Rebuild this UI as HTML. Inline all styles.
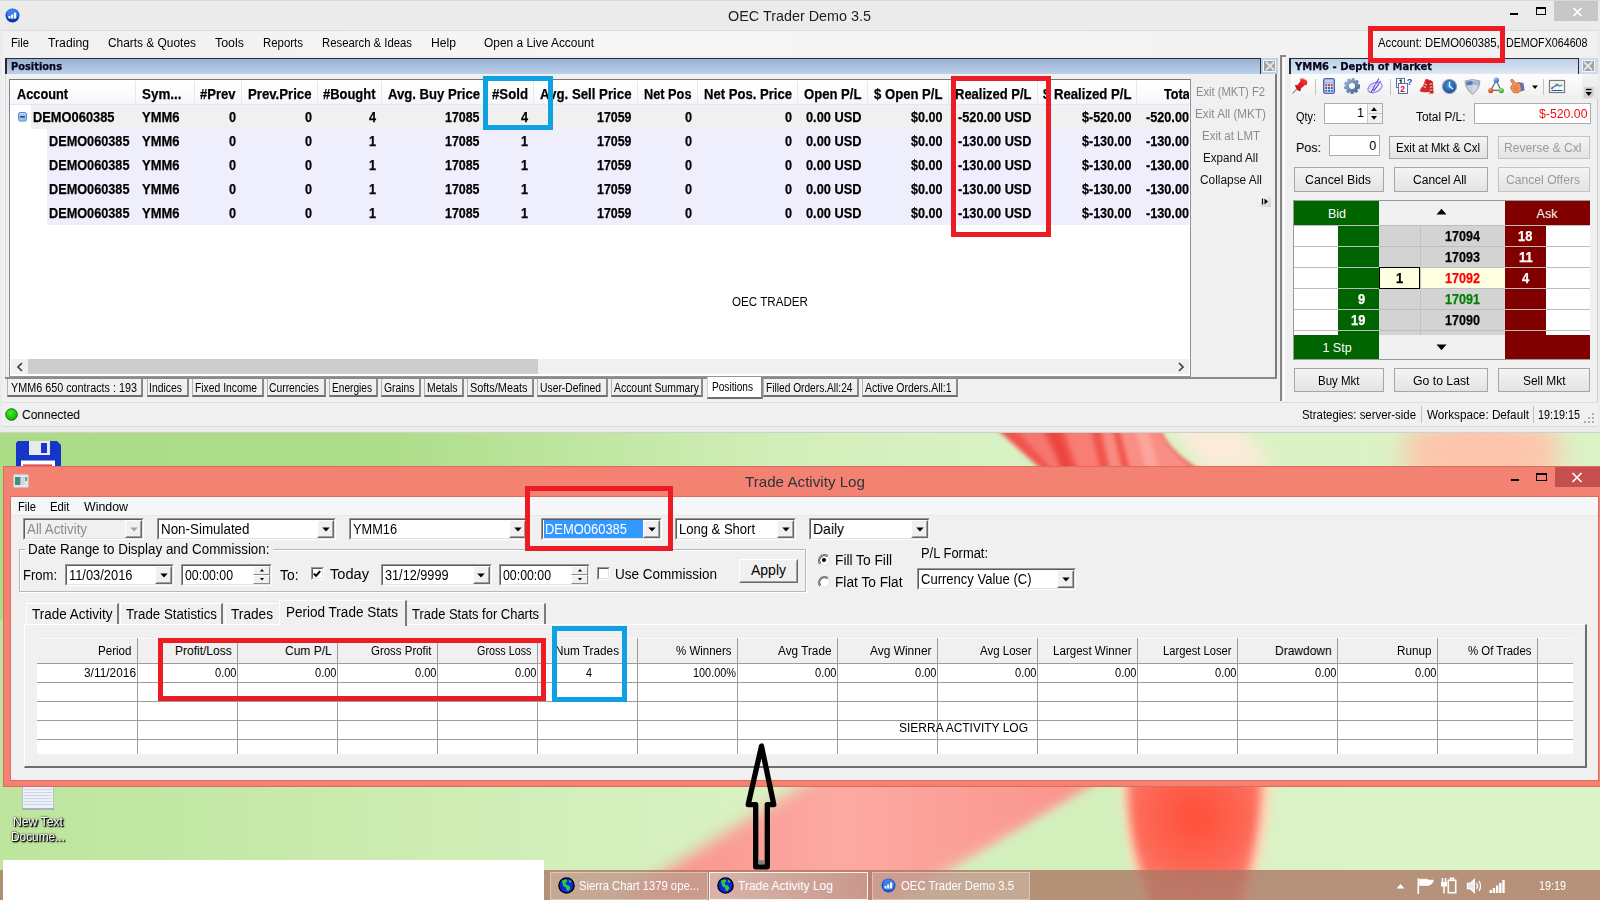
<!DOCTYPE html>
<html lang="en"><head><meta charset="utf-8"><title>OEC Trader Demo 3.5</title>
<style>
html,body{margin:0;padding:0;}
body{width:1600px;height:911px;overflow:hidden;position:relative;background:#fff;font-family:"Liberation Sans",sans-serif;}
div,span,svg{position:absolute;box-sizing:border-box;}
.t{white-space:nowrap;transform-origin:0 50%;display:block;font-family:"Liberation Sans",sans-serif;}
.dv{font-family:"DejaVu Sans",sans-serif;}
.win{overflow:hidden;}
</style></head>
<body>
<div style="left:0;top:0;width:1600px;height:620px;background:linear-gradient(90deg,#abdc86 0px,#addd89 380px,#bfe6a0 580px,#d2eeb9 780px,#d9f2c4 1000px,#dbf3c6 1600px);"></div>
<div style="left:0;top:620px;width:1600px;height:291px;background:linear-gradient(90deg,#bde59d 0px,#c4e8a6 200px,#d0edb6 480px,#d9f2c3 760px,#dcf3c7 1600px);"></div>
<svg style="left:0;top:0" width="1600" height="911" viewBox="0 0 1600 911">
<defs>
<filter id="b2" x="-20%" y="-20%" width="140%" height="140%"><feGaussianBlur stdDeviation="2"/></filter>
<filter id="b5" x="-20%" y="-20%" width="140%" height="140%"><feGaussianBlur stdDeviation="5"/></filter>
<filter id="b8" x="-20%" y="-20%" width="140%" height="140%"><feGaussianBlur stdDeviation="8"/></filter>
<filter id="b12" x="-30%" y="-30%" width="160%" height="160%"><feGaussianBlur stdDeviation="12"/></filter>
<linearGradient id="pk" x1="0" y1="0" x2="1" y2="0"><stop offset="0" stop-color="#f98e86"/><stop offset="0.45" stop-color="#fcaaa2"/><stop offset="1" stop-color="#fa9088"/></linearGradient>
<radialGradient id="rd" cx="0.5" cy="0.35" r="0.6"><stop offset="0" stop-color="#ff4e38"/><stop offset="0.7" stop-color="#fd6a58"/><stop offset="1" stop-color="#fc8272"/></radialGradient>
</defs>
<!-- upper strip -->
<g>
<polygon points="1170,425 1240,425 1275,470 1205,470" fill="#fcebd9" filter="url(#b8)"/>
<ellipse cx="1482" cy="452" rx="80" ry="40" fill="#fdc6ac" filter="url(#b12)"/>
<path d="M992,425 L1158,425 Q1166,450 1200,470 L1042,470 Z" fill="#f1554e" filter="url(#b2)"/>
<polygon points="1012,425 1040,425 1062,470 1052,470" fill="#f6766f" filter="url(#b2)"/>
<polygon points="1046,425 1056,425 1072,470 1064,470" fill="#ec4440" filter="url(#b2)"/>
<polygon points="1062,425 1090,425 1100,470 1078,470" fill="#f87d75" filter="url(#b2)"/>
<polygon points="1100,425 1112,425 1122,470 1110,470" fill="#f98b82" filter="url(#b2)"/>
<path d="M1118,425 L1158,425 Q1166,450 1196,470 L1130,470 Z" fill="#f98e85" filter="url(#b2)"/>
<polygon points="1134,425 1146,425 1160,470 1146,470" fill="#fba59b" filter="url(#b2)"/>
</g>
<!-- lower strip -->
<g>
<polygon points="827,770 1127,770 890,905 610,905" fill="url(#pk)" filter="url(#b8)"/>
<polygon points="1112,776 1138,905 900,905" fill="#d3efbb" filter="url(#b5)"/>
<path d="M1124,770 L1272,770 C1272,800 1266,860 1246,905 L1146,905 C1128,860 1122,810 1124,770 Z" fill="#fbd9b8" filter="url(#b5)"/>
<path d="M1128,770 L1262,770 C1262,800 1256,860 1238,905 L1152,905 C1134,860 1126,810 1128,770 Z" fill="url(#rd)" filter="url(#b5)"/>
</g>
</svg>
<svg style="left:16px;top:441px" width="46" height="30" viewBox="0 0 46 30">
<path d="M2,0 H41 L45,4 V30 H0 V2 Z" fill="#1536c8"/>
<rect x="13" y="0" width="21" height="14" fill="#e8e8ee"/>
<rect x="25" y="2" width="6" height="10" fill="#1536c8"/>
<rect x="5" y="19.500" width="34" height="11" fill="#ffffff"/>
<rect x="7" y="23.500" width="29" height="1.300" fill="#e02030"/>
</svg>
<div style="left:0px;top:0px;width:1600px;height:433px;background:#ebebeb;"></div>
<div style="left:0px;top:0px;width:1600px;height:1px;background:#dadada;"></div>
<div style="left:2px;top:31px;width:1596px;height:396px;background:#f0f0f0;"></div>
<div style="left:2px;top:30px;width:1596px;height:1px;background:#dcdcdc;"></div>
<div style="left:2px;top:31px;width:1596px;height:25px;background:linear-gradient(90deg,#f1f1f1,#f6f6f6 40%,#f1f1f1);"></div>
<div style="left:0px;top:432px;width:1600px;height:1px;background:#d0d0d0;"></div>
<svg style="left:5px;top:8px" width="15" height="15" viewBox="0 0 15 15">
<circle cx="7.5" cy="7.5" r="7" fill="#1a4fc4"/><circle cx="7.5" cy="6.3" r="5.6" fill="#3d7fe8"/><path d="M1.5,9 Q7.5,14 13.5,9 Q12,14 7.5,14.3 Q3,14 1.5,9Z" fill="#12349a"/>
<rect x="3.4" y="8" width="2" height="2.4" fill="#fff"/><rect x="6.1" y="6.6" width="2" height="3.8" fill="#fff"/><rect x="8.9" y="4.6" width="2.2" height="5.8" fill="#fff"/>
</svg>
<span class="t" style="left:728.00px;top:5.70px;font-size:15px;line-height:20px;color:#1e1e1e;transform:scaleX(0.9583);">OEC Trader Demo 3.5</span>
<div style="left:1510px;top:12.5px;width:8px;height:2px;background:#000;"></div>
<div style="left:1536px;top:7.2px;width:10px;height:8.3px;border:1px solid #000;border-top-width:2.5px;"></div>
<div style="left:1554px;top:1px;width:44px;height:20px;background:#c7c7c7;"></div>
<svg style="left:1571.5px;top:6.5px" width="11" height="10" viewBox="0 0 12 11"><path d="M1.5,1 L10.5,10 M10.5,1 L1.5,10" stroke="#fff" stroke-width="1.7" fill="none"/></svg>
<span class="t" style="left:11.00px;top:34.60px;font-size:12px;line-height:16px;color:#000;transform:scaleX(0.9309);">File</span>
<span class="t" style="left:48.00px;top:34.60px;font-size:12px;line-height:16px;color:#000;transform:scaleX(1.0188);">Trading</span>
<span class="t" style="left:108.00px;top:34.60px;font-size:12px;line-height:16px;color:#000;transform:scaleX(0.9920);">Charts &amp; Quotes</span>
<span class="t" style="left:215.00px;top:34.60px;font-size:12px;line-height:16px;color:#000;transform:scaleX(1.0352);">Tools</span>
<span class="t" style="left:263.00px;top:34.60px;font-size:12px;line-height:16px;color:#000;transform:scaleX(0.9520);">Reports</span>
<span class="t" style="left:322.00px;top:34.60px;font-size:12px;line-height:16px;color:#000;transform:scaleX(0.9435);">Research &amp; Ideas</span>
<span class="t" style="left:431.00px;top:34.60px;font-size:12px;line-height:16px;color:#000;transform:scaleX(1.0130);">Help</span>
<span class="t" style="left:484.00px;top:34.60px;font-size:12px;line-height:16px;color:#000;transform:scaleX(0.9933);">Open a Live Account</span>
<span class="t" style="left:1378.00px;top:34.60px;font-size:12px;line-height:16px;color:#000;transform:scaleX(0.9405);">Account: DEMO060385,</span>
<span class="t" style="left:1506.30px;top:34.60px;font-size:12px;line-height:16px;color:#000;transform:scaleX(0.8919);">DEMOFX064608</span>
<div style="left:5px;top:58px;width:1256px;height:16px;background:linear-gradient(#98b2d4,#bccfe9);border-top:1.5px solid #2e2e2e;border-left:2px solid #2a2a2a;border-right:1.5px solid #2a2a2a;"></div>
<div style="left:1261px;top:58px;width:17px;height:16px;background:#bed0ea;"></div>
<div style="left:1263px;top:59.5px;width:13px;height:12.5px;background:#a2a2a2;border:1px solid #f4f6fa;"></div>
<svg style="left:1264.5px;top:61px" width="10" height="10" viewBox="0 0 10 10"><path d="M1,1 L9,9 M9,1 L1,9" stroke="#e6e6e6" stroke-width="1.8" fill="none"/></svg>
<span class="t dv" style="left:11.00px;top:59.00px;font-size:10.5px;line-height:14px;color:#05051a;font-weight:700;-webkit-text-stroke:0.25px #05051a;transform:scaleX(0.9390);">Positions</span>
<div style="left:5px;top:74px;width:1273px;height:303px;background:#f0f0f0;border-left:1px solid #d9d9d9;"></div>
<div style="left:1191px;top:79px;width:84px;height:297px;background:#f0f0f0;"></div>
<div style="left:1275.2px;top:74px;width:2px;height:304px;background:#7c7c7c;"></div>
<div style="left:5px;top:377.1px;width:1272.2px;height:2px;background:#8a8a8a;"></div>
<span class="t" style="left:1196.00px;top:84.40px;font-size:12px;line-height:16px;color:#8b8b8b;transform:scaleX(0.9325);">Exit (MKT) F2</span>
<span class="t" style="left:1195.00px;top:106.40px;font-size:12px;line-height:16px;color:#8b8b8b;transform:scaleX(0.9770);">Exit All (MKT)</span>
<span class="t" style="left:1202.00px;top:128.40px;font-size:12px;line-height:16px;color:#8b8b8b;transform:scaleX(0.9558);">Exit at LMT</span>
<span class="t" style="left:1203.00px;top:150.40px;font-size:12px;line-height:16px;color:#111;transform:scaleX(0.9699);">Expand All</span>
<span class="t" style="left:1200.00px;top:172.40px;font-size:12px;line-height:16px;color:#111;transform:scaleX(0.9888);">Collapse All</span>
<div style="left:1259px;top:196px;width:12px;height:11px;background:linear-gradient(135deg,#fff,#cfcfcf);"></div>
<svg style="left:1260px;top:197px" width="10" height="9" viewBox="0 0 10 9"><path d="M2.5,1.5V7.5" stroke="#000" stroke-width="1.2"/><path d="M4.5,1.5 L8,4.5 L4.5,7.5Z" fill="#000"/></svg>
<div style="left:9px;top:79px;width:1182px;height:297.8px;background:#fff;border:1px solid #767676;border-top-width:1.5px;border-left-color:#7c8798;border-right-color:#8c92a2;border-bottom-color:#8c96a8;"></div>
<div style="left:10px;top:80.5px;width:1179px;height:24px;background:linear-gradient(#ffffff,#fbfbfd 60%,#f3f5fa);border-bottom:1px solid #e1e7f3;"></div>
<div style="left:134.5px;top:81px;width:1.5px;height:23px;background:#e3e8f3;"></div>
<div style="left:193.5px;top:81px;width:1.5px;height:23px;background:#e3e8f3;"></div>
<div style="left:240.5px;top:81px;width:1.5px;height:23px;background:#e3e8f3;"></div>
<div style="left:316.5px;top:81px;width:1.5px;height:23px;background:#e3e8f3;"></div>
<div style="left:380.5px;top:81px;width:1.5px;height:23px;background:#e3e8f3;"></div>
<div style="left:482.5px;top:81px;width:1.5px;height:23px;background:#e3e8f3;"></div>
<div style="left:532.5px;top:81px;width:1.5px;height:23px;background:#e3e8f3;"></div>
<div style="left:636.5px;top:81px;width:1.5px;height:23px;background:#e3e8f3;"></div>
<div style="left:696.5px;top:81px;width:1.5px;height:23px;background:#e3e8f3;"></div>
<div style="left:796.5px;top:81px;width:1.5px;height:23px;background:#e3e8f3;"></div>
<div style="left:866.5px;top:81px;width:1.5px;height:23px;background:#e3e8f3;"></div>
<div style="left:947.5px;top:81px;width:1.5px;height:23px;background:#e3e8f3;"></div>
<div style="left:1036.5px;top:81px;width:1.5px;height:23px;background:#e3e8f3;"></div>
<div style="left:1135.5px;top:81px;width:1.5px;height:23px;background:#e3e8f3;"></div>
<span class="t" style="left:17.00px;top:83.80px;font-size:15px;line-height:20px;color:#000;font-weight:700;-webkit-text-stroke:0.25px #000;transform:scaleX(0.8500);">Account</span>
<span class="t" style="left:142.00px;top:83.80px;font-size:15px;line-height:20px;color:#000;font-weight:700;-webkit-text-stroke:0.25px #000;transform:scaleX(0.8939);">Sym...</span>
<span class="t" style="left:200.20px;top:83.80px;font-size:15px;line-height:20px;color:#000;font-weight:700;-webkit-text-stroke:0.25px #000;transform:scaleX(0.8686);">#Prev</span>
<span class="t" style="left:248.20px;top:83.80px;font-size:15px;line-height:20px;color:#000;font-weight:700;-webkit-text-stroke:0.25px #000;transform:scaleX(0.8786);">Prev.Price</span>
<span class="t" style="left:323.20px;top:83.80px;font-size:15px;line-height:20px;color:#000;font-weight:700;-webkit-text-stroke:0.25px #000;transform:scaleX(0.8632);">#Bought</span>
<span class="t" style="left:387.70px;top:83.80px;font-size:15px;line-height:20px;color:#000;font-weight:700;-webkit-text-stroke:0.25px #000;transform:scaleX(0.8736);">Avg. Buy Price</span>
<span class="t" style="left:491.70px;top:83.80px;font-size:15px;line-height:20px;color:#000;font-weight:700;-webkit-text-stroke:0.25px #000;transform:scaleX(0.8815);">#Sold</span>
<span class="t" style="left:540.20px;top:83.80px;font-size:15px;line-height:20px;color:#000;font-weight:700;-webkit-text-stroke:0.25px #000;transform:scaleX(0.8827);">Avg. Sell Price</span>
<span class="t" style="left:644.20px;top:83.80px;font-size:15px;line-height:20px;color:#000;font-weight:700;-webkit-text-stroke:0.25px #000;transform:scaleX(0.8505);">Net Pos</span>
<span class="t" style="left:703.70px;top:83.80px;font-size:15px;line-height:20px;color:#000;font-weight:700;-webkit-text-stroke:0.25px #000;transform:scaleX(0.8724);">Net Pos. Price</span>
<span class="t" style="left:804.20px;top:83.80px;font-size:15px;line-height:20px;color:#000;font-weight:700;-webkit-text-stroke:0.25px #000;transform:scaleX(0.8734);">Open P/L</span>
<span class="t" style="left:874.20px;top:83.80px;font-size:15px;line-height:20px;color:#000;font-weight:700;-webkit-text-stroke:0.25px #000;transform:scaleX(0.8743);">$ Open P/L</span>
<span class="t" style="left:955.00px;top:83.80px;font-size:15px;line-height:20px;color:#000;font-weight:700;-webkit-text-stroke:0.25px #000;transform:scaleX(0.8658);">Realized P/L</span>
<span class="t" style="left:1043.20px;top:83.80px;font-size:15px;line-height:20px;color:#000;font-weight:700;-webkit-text-stroke:0.25px #000;transform:scaleX(0.8774);">$ Realized P/L</span>
<div style="left:1136px;top:81px;width:53px;height:23px;overflow:hidden;">
<span class="t" style="left:28.00px;top:2.80px;font-size:15px;line-height:20px;color:#000;font-weight:700;-webkit-text-stroke:0.25px #000;transform:scaleX(0.8400);">Total P/L</span>
</div>
<div style="left:31px;top:105px;width:1158px;height:24px;background:#f0f0f0;"></div>
<div style="left:47px;top:129px;width:1142px;height:96px;background:#efeefc;"></div>
<svg style="left:18px;top:112px" width="9" height="10" viewBox="0 0 9 10"><defs><linearGradient id="ex" x1="0" y1="0" x2="0" y2="1"><stop offset="0" stop-color="#c3d8f4"/><stop offset="0.5" stop-color="#8fb2e6"/><stop offset="1" stop-color="#a9c6ee"/></linearGradient></defs><rect x="0.5" y="0.5" width="8" height="8.6" rx="1.6" fill="url(#ex)" stroke="#5f8ad0"/><path d="M2.2,4.8H6.800" stroke="#24479a" stroke-width="1.500"/></svg>
<span class="t" style="left:33.00px;top:107.00px;font-size:15px;line-height:20px;color:#000;font-weight:700;-webkit-text-stroke:0.25px #000;transform:scaleX(0.8574);">DEMO060385</span>
<span class="t" style="left:142.00px;top:107.00px;font-size:15px;line-height:20px;color:#000;font-weight:700;-webkit-text-stroke:0.25px #000;transform:scaleX(0.8653);">YMM6</span>
<span class="t" style="left:228.65px;top:107.00px;font-size:15px;line-height:20px;color:#000;font-weight:700;-webkit-text-stroke:0.25px #000;transform:scaleX(0.8450);">0</span>
<span class="t" style="left:304.65px;top:107.00px;font-size:15px;line-height:20px;color:#000;font-weight:700;-webkit-text-stroke:0.25px #000;transform:scaleX(0.8450);">0</span>
<span class="t" style="left:368.65px;top:107.00px;font-size:15px;line-height:20px;color:#000;font-weight:700;-webkit-text-stroke:0.25px #000;transform:scaleX(0.8450);">4</span>
<span class="t" style="left:445.20px;top:107.00px;font-size:15px;line-height:20px;color:#000;font-weight:700;-webkit-text-stroke:0.25px #000;transform:scaleX(0.8271);">17085</span>
<span class="t" style="left:520.65px;top:107.00px;font-size:15px;line-height:20px;color:#000;font-weight:700;-webkit-text-stroke:0.25px #000;transform:scaleX(0.8450);">4</span>
<span class="t" style="left:597.20px;top:107.00px;font-size:15px;line-height:20px;color:#000;font-weight:700;-webkit-text-stroke:0.25px #000;transform:scaleX(0.8271);">17059</span>
<span class="t" style="left:684.65px;top:107.00px;font-size:15px;line-height:20px;color:#000;font-weight:700;-webkit-text-stroke:0.25px #000;transform:scaleX(0.8450);">0</span>
<span class="t" style="left:784.65px;top:107.00px;font-size:15px;line-height:20px;color:#000;font-weight:700;-webkit-text-stroke:0.25px #000;transform:scaleX(0.8450);">0</span>
<span class="t" style="left:806.20px;top:107.00px;font-size:15px;line-height:20px;color:#000;font-weight:700;-webkit-text-stroke:0.25px #000;transform:scaleX(0.8534);">0.00 USD</span>
<span class="t" style="left:911.20px;top:107.00px;font-size:15px;line-height:20px;color:#000;font-weight:700;-webkit-text-stroke:0.25px #000;transform:scaleX(0.8392);">$0.00</span>
<span class="t" style="left:958.00px;top:107.00px;font-size:15px;line-height:20px;color:#000;font-weight:700;-webkit-text-stroke:0.25px #000;transform:scaleX(0.8476);">-520.00 USD</span>
<span class="t" style="left:1082.20px;top:107.00px;font-size:15px;line-height:20px;color:#000;font-weight:700;-webkit-text-stroke:0.25px #000;transform:scaleX(0.8359);">$-520.00</span>
<div style="left:1136px;top:105px;width:53px;height:24px;overflow:hidden;">
<span class="t" style="left:9.50px;top:2.00px;font-size:15px;line-height:20px;color:#000;font-weight:700;-webkit-text-stroke:0.25px #000;transform:scaleX(0.8450);">-520.00 USD</span>
</div>
<span class="t" style="left:49.00px;top:131.00px;font-size:15px;line-height:20px;color:#000;font-weight:700;-webkit-text-stroke:0.25px #000;transform:scaleX(0.8469);">DEMO060385</span>
<span class="t" style="left:142.00px;top:131.00px;font-size:15px;line-height:20px;color:#000;font-weight:700;-webkit-text-stroke:0.25px #000;transform:scaleX(0.8653);">YMM6</span>
<span class="t" style="left:228.65px;top:131.00px;font-size:15px;line-height:20px;color:#000;font-weight:700;-webkit-text-stroke:0.25px #000;transform:scaleX(0.8450);">0</span>
<span class="t" style="left:304.65px;top:131.00px;font-size:15px;line-height:20px;color:#000;font-weight:700;-webkit-text-stroke:0.25px #000;transform:scaleX(0.8450);">0</span>
<span class="t" style="left:368.65px;top:131.00px;font-size:15px;line-height:20px;color:#000;font-weight:700;-webkit-text-stroke:0.25px #000;transform:scaleX(0.8450);">1</span>
<span class="t" style="left:445.20px;top:131.00px;font-size:15px;line-height:20px;color:#000;font-weight:700;-webkit-text-stroke:0.25px #000;transform:scaleX(0.8271);">17085</span>
<span class="t" style="left:520.65px;top:131.00px;font-size:15px;line-height:20px;color:#000;font-weight:700;-webkit-text-stroke:0.25px #000;transform:scaleX(0.8450);">1</span>
<span class="t" style="left:597.20px;top:131.00px;font-size:15px;line-height:20px;color:#000;font-weight:700;-webkit-text-stroke:0.25px #000;transform:scaleX(0.8271);">17059</span>
<span class="t" style="left:684.65px;top:131.00px;font-size:15px;line-height:20px;color:#000;font-weight:700;-webkit-text-stroke:0.25px #000;transform:scaleX(0.8450);">0</span>
<span class="t" style="left:784.65px;top:131.00px;font-size:15px;line-height:20px;color:#000;font-weight:700;-webkit-text-stroke:0.25px #000;transform:scaleX(0.8450);">0</span>
<span class="t" style="left:806.20px;top:131.00px;font-size:15px;line-height:20px;color:#000;font-weight:700;-webkit-text-stroke:0.25px #000;transform:scaleX(0.8534);">0.00 USD</span>
<span class="t" style="left:911.20px;top:131.00px;font-size:15px;line-height:20px;color:#000;font-weight:700;-webkit-text-stroke:0.25px #000;transform:scaleX(0.8392);">$0.00</span>
<span class="t" style="left:958.00px;top:131.00px;font-size:15px;line-height:20px;color:#000;font-weight:700;-webkit-text-stroke:0.25px #000;transform:scaleX(0.8476);">-130.00 USD</span>
<span class="t" style="left:1082.20px;top:131.00px;font-size:15px;line-height:20px;color:#000;font-weight:700;-webkit-text-stroke:0.25px #000;transform:scaleX(0.8359);">$-130.00</span>
<div style="left:1136px;top:129px;width:53px;height:24px;overflow:hidden;">
<span class="t" style="left:9.50px;top:2.00px;font-size:15px;line-height:20px;color:#000;font-weight:700;-webkit-text-stroke:0.25px #000;transform:scaleX(0.8450);">-130.00 USD</span>
</div>
<span class="t" style="left:49.00px;top:155.00px;font-size:15px;line-height:20px;color:#000;font-weight:700;-webkit-text-stroke:0.25px #000;transform:scaleX(0.8469);">DEMO060385</span>
<span class="t" style="left:142.00px;top:155.00px;font-size:15px;line-height:20px;color:#000;font-weight:700;-webkit-text-stroke:0.25px #000;transform:scaleX(0.8653);">YMM6</span>
<span class="t" style="left:228.65px;top:155.00px;font-size:15px;line-height:20px;color:#000;font-weight:700;-webkit-text-stroke:0.25px #000;transform:scaleX(0.8450);">0</span>
<span class="t" style="left:304.65px;top:155.00px;font-size:15px;line-height:20px;color:#000;font-weight:700;-webkit-text-stroke:0.25px #000;transform:scaleX(0.8450);">0</span>
<span class="t" style="left:368.65px;top:155.00px;font-size:15px;line-height:20px;color:#000;font-weight:700;-webkit-text-stroke:0.25px #000;transform:scaleX(0.8450);">1</span>
<span class="t" style="left:445.20px;top:155.00px;font-size:15px;line-height:20px;color:#000;font-weight:700;-webkit-text-stroke:0.25px #000;transform:scaleX(0.8271);">17085</span>
<span class="t" style="left:520.65px;top:155.00px;font-size:15px;line-height:20px;color:#000;font-weight:700;-webkit-text-stroke:0.25px #000;transform:scaleX(0.8450);">1</span>
<span class="t" style="left:597.20px;top:155.00px;font-size:15px;line-height:20px;color:#000;font-weight:700;-webkit-text-stroke:0.25px #000;transform:scaleX(0.8271);">17059</span>
<span class="t" style="left:684.65px;top:155.00px;font-size:15px;line-height:20px;color:#000;font-weight:700;-webkit-text-stroke:0.25px #000;transform:scaleX(0.8450);">0</span>
<span class="t" style="left:784.65px;top:155.00px;font-size:15px;line-height:20px;color:#000;font-weight:700;-webkit-text-stroke:0.25px #000;transform:scaleX(0.8450);">0</span>
<span class="t" style="left:806.20px;top:155.00px;font-size:15px;line-height:20px;color:#000;font-weight:700;-webkit-text-stroke:0.25px #000;transform:scaleX(0.8534);">0.00 USD</span>
<span class="t" style="left:911.20px;top:155.00px;font-size:15px;line-height:20px;color:#000;font-weight:700;-webkit-text-stroke:0.25px #000;transform:scaleX(0.8392);">$0.00</span>
<span class="t" style="left:958.00px;top:155.00px;font-size:15px;line-height:20px;color:#000;font-weight:700;-webkit-text-stroke:0.25px #000;transform:scaleX(0.8476);">-130.00 USD</span>
<span class="t" style="left:1082.20px;top:155.00px;font-size:15px;line-height:20px;color:#000;font-weight:700;-webkit-text-stroke:0.25px #000;transform:scaleX(0.8359);">$-130.00</span>
<div style="left:1136px;top:153px;width:53px;height:24px;overflow:hidden;">
<span class="t" style="left:9.50px;top:2.00px;font-size:15px;line-height:20px;color:#000;font-weight:700;-webkit-text-stroke:0.25px #000;transform:scaleX(0.8450);">-130.00 USD</span>
</div>
<span class="t" style="left:49.00px;top:179.00px;font-size:15px;line-height:20px;color:#000;font-weight:700;-webkit-text-stroke:0.25px #000;transform:scaleX(0.8469);">DEMO060385</span>
<span class="t" style="left:142.00px;top:179.00px;font-size:15px;line-height:20px;color:#000;font-weight:700;-webkit-text-stroke:0.25px #000;transform:scaleX(0.8653);">YMM6</span>
<span class="t" style="left:228.65px;top:179.00px;font-size:15px;line-height:20px;color:#000;font-weight:700;-webkit-text-stroke:0.25px #000;transform:scaleX(0.8450);">0</span>
<span class="t" style="left:304.65px;top:179.00px;font-size:15px;line-height:20px;color:#000;font-weight:700;-webkit-text-stroke:0.25px #000;transform:scaleX(0.8450);">0</span>
<span class="t" style="left:368.65px;top:179.00px;font-size:15px;line-height:20px;color:#000;font-weight:700;-webkit-text-stroke:0.25px #000;transform:scaleX(0.8450);">1</span>
<span class="t" style="left:445.20px;top:179.00px;font-size:15px;line-height:20px;color:#000;font-weight:700;-webkit-text-stroke:0.25px #000;transform:scaleX(0.8271);">17085</span>
<span class="t" style="left:520.65px;top:179.00px;font-size:15px;line-height:20px;color:#000;font-weight:700;-webkit-text-stroke:0.25px #000;transform:scaleX(0.8450);">1</span>
<span class="t" style="left:597.20px;top:179.00px;font-size:15px;line-height:20px;color:#000;font-weight:700;-webkit-text-stroke:0.25px #000;transform:scaleX(0.8271);">17059</span>
<span class="t" style="left:684.65px;top:179.00px;font-size:15px;line-height:20px;color:#000;font-weight:700;-webkit-text-stroke:0.25px #000;transform:scaleX(0.8450);">0</span>
<span class="t" style="left:784.65px;top:179.00px;font-size:15px;line-height:20px;color:#000;font-weight:700;-webkit-text-stroke:0.25px #000;transform:scaleX(0.8450);">0</span>
<span class="t" style="left:806.20px;top:179.00px;font-size:15px;line-height:20px;color:#000;font-weight:700;-webkit-text-stroke:0.25px #000;transform:scaleX(0.8534);">0.00 USD</span>
<span class="t" style="left:911.20px;top:179.00px;font-size:15px;line-height:20px;color:#000;font-weight:700;-webkit-text-stroke:0.25px #000;transform:scaleX(0.8392);">$0.00</span>
<span class="t" style="left:958.00px;top:179.00px;font-size:15px;line-height:20px;color:#000;font-weight:700;-webkit-text-stroke:0.25px #000;transform:scaleX(0.8476);">-130.00 USD</span>
<span class="t" style="left:1082.20px;top:179.00px;font-size:15px;line-height:20px;color:#000;font-weight:700;-webkit-text-stroke:0.25px #000;transform:scaleX(0.8359);">$-130.00</span>
<div style="left:1136px;top:177px;width:53px;height:24px;overflow:hidden;">
<span class="t" style="left:9.50px;top:2.00px;font-size:15px;line-height:20px;color:#000;font-weight:700;-webkit-text-stroke:0.25px #000;transform:scaleX(0.8450);">-130.00 USD</span>
</div>
<span class="t" style="left:49.00px;top:203.00px;font-size:15px;line-height:20px;color:#000;font-weight:700;-webkit-text-stroke:0.25px #000;transform:scaleX(0.8469);">DEMO060385</span>
<span class="t" style="left:142.00px;top:203.00px;font-size:15px;line-height:20px;color:#000;font-weight:700;-webkit-text-stroke:0.25px #000;transform:scaleX(0.8653);">YMM6</span>
<span class="t" style="left:228.65px;top:203.00px;font-size:15px;line-height:20px;color:#000;font-weight:700;-webkit-text-stroke:0.25px #000;transform:scaleX(0.8450);">0</span>
<span class="t" style="left:304.65px;top:203.00px;font-size:15px;line-height:20px;color:#000;font-weight:700;-webkit-text-stroke:0.25px #000;transform:scaleX(0.8450);">0</span>
<span class="t" style="left:368.65px;top:203.00px;font-size:15px;line-height:20px;color:#000;font-weight:700;-webkit-text-stroke:0.25px #000;transform:scaleX(0.8450);">1</span>
<span class="t" style="left:445.20px;top:203.00px;font-size:15px;line-height:20px;color:#000;font-weight:700;-webkit-text-stroke:0.25px #000;transform:scaleX(0.8271);">17085</span>
<span class="t" style="left:520.65px;top:203.00px;font-size:15px;line-height:20px;color:#000;font-weight:700;-webkit-text-stroke:0.25px #000;transform:scaleX(0.8450);">1</span>
<span class="t" style="left:597.20px;top:203.00px;font-size:15px;line-height:20px;color:#000;font-weight:700;-webkit-text-stroke:0.25px #000;transform:scaleX(0.8271);">17059</span>
<span class="t" style="left:684.65px;top:203.00px;font-size:15px;line-height:20px;color:#000;font-weight:700;-webkit-text-stroke:0.25px #000;transform:scaleX(0.8450);">0</span>
<span class="t" style="left:784.65px;top:203.00px;font-size:15px;line-height:20px;color:#000;font-weight:700;-webkit-text-stroke:0.25px #000;transform:scaleX(0.8450);">0</span>
<span class="t" style="left:806.20px;top:203.00px;font-size:15px;line-height:20px;color:#000;font-weight:700;-webkit-text-stroke:0.25px #000;transform:scaleX(0.8534);">0.00 USD</span>
<span class="t" style="left:911.20px;top:203.00px;font-size:15px;line-height:20px;color:#000;font-weight:700;-webkit-text-stroke:0.25px #000;transform:scaleX(0.8392);">$0.00</span>
<span class="t" style="left:958.00px;top:203.00px;font-size:15px;line-height:20px;color:#000;font-weight:700;-webkit-text-stroke:0.25px #000;transform:scaleX(0.8476);">-130.00 USD</span>
<span class="t" style="left:1082.20px;top:203.00px;font-size:15px;line-height:20px;color:#000;font-weight:700;-webkit-text-stroke:0.25px #000;transform:scaleX(0.8359);">$-130.00</span>
<div style="left:1136px;top:201px;width:53px;height:24px;overflow:hidden;">
<span class="t" style="left:9.50px;top:2.00px;font-size:15px;line-height:20px;color:#000;font-weight:700;-webkit-text-stroke:0.25px #000;transform:scaleX(0.8450);">-130.00 USD</span>
</div>
<div style="left:11px;top:359px;width:1178px;height:15.2px;background:#f0f0f0;"></div>
<div style="left:28px;top:359px;width:510px;height:15.2px;background:#cdcdcd;"></div>
<svg style="left:14.5px;top:361.5px" width="10" height="10" viewBox="0 0 10 10"><path d="M7,1 L3,5 L7,9" stroke="#404040" stroke-width="1.7" fill="none"/></svg>
<svg style="left:1175.5px;top:361.5px" width="10" height="10" viewBox="0 0 10 10"><path d="M3,1 L7,5 L3,9" stroke="#404040" stroke-width="1.7" fill="none"/></svg>
<div style="left:6.5px;top:379px;width:136.5px;height:18px;background:#f0f0f0;border-left:1px solid #b4b4b4;border-bottom:2px solid #6e6e6e;border-right:2px solid #8a8a8a;"></div>
<span class="t" style="left:11.00px;top:379.50px;font-size:12.5px;line-height:16px;color:#000;transform:scaleX(0.8636);">YMM6 650 contracts : 193</span>
<div style="left:147px;top:379px;width:42px;height:18px;background:#f0f0f0;border-left:1px solid #b4b4b4;border-bottom:2px solid #6e6e6e;border-right:2px solid #8a8a8a;"></div>
<span class="t" style="left:149.00px;top:379.50px;font-size:12.5px;line-height:16px;color:#000;transform:scaleX(0.8332);">Indices</span>
<div style="left:192px;top:379px;width:72px;height:18px;background:#f0f0f0;border-left:1px solid #b4b4b4;border-bottom:2px solid #6e6e6e;border-right:2px solid #8a8a8a;"></div>
<span class="t" style="left:195.00px;top:379.50px;font-size:12.5px;line-height:16px;color:#000;transform:scaleX(0.8263);">Fixed Income</span>
<div style="left:267px;top:379px;width:59px;height:18px;background:#f0f0f0;border-left:1px solid #b4b4b4;border-bottom:2px solid #6e6e6e;border-right:2px solid #8a8a8a;"></div>
<span class="t" style="left:269.00px;top:379.50px;font-size:12.5px;line-height:16px;color:#000;transform:scaleX(0.8273);">Currencies</span>
<div style="left:329px;top:379px;width:49px;height:18px;background:#f0f0f0;border-left:1px solid #b4b4b4;border-bottom:2px solid #6e6e6e;border-right:2px solid #8a8a8a;"></div>
<span class="t" style="left:332.00px;top:379.50px;font-size:12.5px;line-height:16px;color:#000;transform:scaleX(0.8108);">Energies</span>
<div style="left:381px;top:379px;width:40px;height:18px;background:#f0f0f0;border-left:1px solid #b4b4b4;border-bottom:2px solid #6e6e6e;border-right:2px solid #8a8a8a;"></div>
<span class="t" style="left:384.00px;top:379.50px;font-size:12.5px;line-height:16px;color:#000;transform:scaleX(0.8284);">Grains</span>
<div style="left:424px;top:379px;width:40px;height:18px;background:#f0f0f0;border-left:1px solid #b4b4b4;border-bottom:2px solid #6e6e6e;border-right:2px solid #8a8a8a;"></div>
<span class="t" style="left:427.00px;top:379.50px;font-size:12.5px;line-height:16px;color:#000;transform:scaleX(0.8284);">Metals</span>
<div style="left:467px;top:379px;width:67px;height:18px;background:#f0f0f0;border-left:1px solid #b4b4b4;border-bottom:2px solid #6e6e6e;border-right:2px solid #8a8a8a;"></div>
<span class="t" style="left:470.00px;top:379.50px;font-size:12.5px;line-height:16px;color:#000;transform:scaleX(0.8712);">Softs/Meats</span>
<div style="left:537px;top:379px;width:71px;height:18px;background:#f0f0f0;border-left:1px solid #b4b4b4;border-bottom:2px solid #6e6e6e;border-right:2px solid #8a8a8a;"></div>
<span class="t" style="left:540.00px;top:379.50px;font-size:12.5px;line-height:16px;color:#000;transform:scaleX(0.8284);">User-Defined</span>
<div style="left:611px;top:379px;width:92px;height:18px;background:#f0f0f0;border-left:1px solid #b4b4b4;border-bottom:2px solid #6e6e6e;border-right:2px solid #8a8a8a;"></div>
<span class="t" style="left:614.00px;top:379.50px;font-size:12.5px;line-height:16px;color:#000;transform:scaleX(0.8324);">Account Summary</span>
<div style="left:763px;top:379px;width:96px;height:18px;background:#f0f0f0;border-left:1px solid #b4b4b4;border-bottom:2px solid #6e6e6e;border-right:2px solid #8a8a8a;"></div>
<span class="t" style="left:766.00px;top:379.50px;font-size:12.5px;line-height:16px;color:#000;transform:scaleX(0.8138);">Filled Orders.All:24</span>
<div style="left:862px;top:379px;width:96px;height:18px;background:#f0f0f0;border-left:1px solid #b4b4b4;border-bottom:2px solid #6e6e6e;border-right:2px solid #8a8a8a;"></div>
<span class="t" style="left:865.00px;top:379.50px;font-size:12.5px;line-height:16px;color:#000;transform:scaleX(0.8357);">Active Orders.All:1</span>
<div style="left:707px;top:376.5px;width:56px;height:22px;background:#fff;border:1px solid #a0a0a0;border-top:none;border-bottom:2px solid #6e6e6e;border-right:2px solid #8a8a8a;border-left-color:#d0d0d0;"></div>
<span class="t" style="left:712.00px;top:378.70px;font-size:12.5px;line-height:16px;color:#000;transform:scaleX(0.8084);">Positions</span>
<div style="left:2px;top:402px;width:1596px;height:1px;background:#dedede;"></div>
<div style="left:2px;top:426px;width:1596px;height:1px;background:#d9d9d9;"></div>
<svg style="left:4.5px;top:407.5px" width="13" height="13" viewBox="0 0 13 13"><defs><radialGradient id="gg" cx="0.4" cy="0.35" r="0.7"><stop offset="0" stop-color="#46f020"/><stop offset="1" stop-color="#0fa80a"/></radialGradient></defs><circle cx="6.5" cy="6.5" r="5.8" fill="url(#gg)" stroke="#0a7a0a" stroke-width="1"/></svg>
<span class="t" style="left:22.00px;top:407.20px;font-size:12px;line-height:16px;color:#000;">Connected</span>
<span class="t" style="left:1302.00px;top:407.20px;font-size:12px;line-height:16px;color:#000;transform:scaleX(0.9496);">Strategies: server-side</span>
<div style="left:1421px;top:406px;width:1px;height:17px;background:#c0c0c0;"></div>
<span class="t" style="left:1427.00px;top:407.20px;font-size:12px;line-height:16px;color:#000;transform:scaleX(0.9762);">Workspace: Default</span>
<div style="left:1533px;top:406px;width:1px;height:17px;background:#c0c0c0;"></div>
<span class="t" style="left:1538.00px;top:407.20px;font-size:12px;line-height:16px;color:#000;transform:scaleX(0.8991);">19:19:15</span>
<svg style="left:1584px;top:413px" width="12" height="12" viewBox="0 0 12 12"><g fill="#b0b0b0"><rect x="8" y="8" width="2" height="2"/><rect x="4" y="8" width="2" height="2"/><rect x="8" y="4" width="2" height="2"/><rect x="0" y="8" width="2" height="2"/><rect x="4" y="4" width="2" height="2"/><rect x="8" y="0" width="2" height="2"/></g></svg>
<div style="left:1280px;top:55px;width:1.8px;height:345.5px;background:#868686;"></div>
<div style="left:1280px;top:55px;width:6px;height:1.5px;background:#8a8a8a;"></div>
<div style="left:1283px;top:58px;width:1.5px;height:342.5px;background:#fbfbfb;"></div>
<div style="left:1597.3px;top:74px;width:1.2px;height:328px;background:#cfcfcf;"></div>
<div style="left:1289px;top:58px;width:290px;height:16px;background:linear-gradient(#bdcfe9,#e0e9f5);border-top:1.5px solid #2e2e2e;border-left:2px solid #2a2a2a;border-right:1.5px solid #2a2a2a;"></div>
<div style="left:1579px;top:58px;width:19px;height:16px;background:#cddbee;"></div>
<div style="left:1581.5px;top:59.5px;width:13px;height:12.5px;background:#a2a2a2;border:1px solid #f4f6fa;"></div>
<svg style="left:1583px;top:61px" width="10" height="10" viewBox="0 0 10 10"><path d="M1,1 L9,9 M9,1 L1,9" stroke="#e6e6e6" stroke-width="1.8" fill="none"/></svg>
<span class="t dv" style="left:1294.50px;top:59.00px;font-size:10.5px;line-height:14px;color:#05051a;font-weight:700;-webkit-text-stroke:0.25px #05051a;transform:scaleX(0.9516);">YMM6 - Depth of Market</span>
<div style="left:1291px;top:74px;width:291px;height:25px;background:linear-gradient(#fdfdfd,#f7f7f7 55%,#eeeeee);"></div>
<div style="left:1582px;top:74px;width:16px;height:25px;background:linear-gradient(#f4f4f4,#e4e4e4);"></div>
<svg style="left:1289px;top:75px" width="310" height="24" viewBox="0 0 310 24">
<defs><linearGradient id="cg" x1="0" y1="0" x2="0" y2="1"><stop offset="0" stop-color="#9db6e6"/><stop offset="1" stop-color="#5d7cc0"/></linearGradient>
<radialGradient id="ck" cx="0.45" cy="0.4" r="0.6"><stop offset="0" stop-color="#4f9ae0"/><stop offset="1" stop-color="#15509e"/></radialGradient>
<linearGradient id="gr" x1="0" y1="0" x2="1" y2="1"><stop offset="0" stop-color="#8fa9d0"/><stop offset="1" stop-color="#4f6d9c"/></linearGradient>
<radialGradient id="bb" cx="0.35" cy="0.3" r="0.7"><stop offset="0" stop-color="#9cc4ff"/><stop offset="1" stop-color="#2a62c8"/></radialGradient>
<radialGradient id="br" cx="0.35" cy="0.3" r="0.7"><stop offset="0" stop-color="#ff9a70"/><stop offset="1" stop-color="#c83a20"/></radialGradient>
<radialGradient id="bg" cx="0.35" cy="0.3" r="0.7"><stop offset="0" stop-color="#9af08a"/><stop offset="1" stop-color="#2a9a2a"/></radialGradient>
</defs>
<!-- pin -->
<path d="M3.500,18.500 L8.500,13.500" stroke="#9a9a9a" stroke-width="1.300"/>
<path d="M5.800,10.200 Q8.500,9 11.800,12.500 Q12.500,15.500 11,16.200 Q8,16 5.800,10.200Z" fill="#c8141a"/>
<path d="M8,10.500 L12,5.500 L16.500,9.500 L12,13.500Z" fill="#e41c22"/>
<path d="M10.800,4.500 Q13.500,1.800 17,4.800 Q19.500,8 17.200,10.300 Q13,9.500 10.800,4.500Z" fill="#ee2a30"/>
<path d="M12.500,4.200 Q14.500,3 16.500,5" stroke="#ffb0b0" stroke-width="1.200" fill="none"/>
<path d="M26.500,4V20" stroke="#c2c2c2"/>
<!-- calc -->
<rect x="34.500" y="3.500" width="11" height="15" rx="1.500" fill="url(#cg)" stroke="#4a68a8"/><rect x="36" y="5" width="8" height="2.600" fill="#b9d2f4"/>
<rect x="35.600" y="8.600" width="8.800" height="9" fill="#dfe8f8"/>
<g fill="#d23a4c"><rect x="36.200" y="9.200" width="2" height="2"/><rect x="39" y="9.200" width="2" height="2"/><rect x="41.800" y="9.200" width="2" height="2"/></g>
<g fill="#4666b2"><rect x="36.200" y="12" width="2" height="2"/><rect x="39" y="12" width="2" height="2"/><rect x="41.800" y="12" width="2" height="2"/><rect x="36.200" y="14.800" width="2" height="2"/><rect x="39" y="14.800" width="2" height="2"/><rect x="41.800" y="14.800" width="2" height="2"/></g>
<!-- gear -->
<circle cx="63" cy="11" r="6.300" fill="none" stroke="url(#gr)" stroke-width="3.600" stroke-dasharray="2.600 1.500"/><circle cx="63" cy="11" r="4.800" fill="none" stroke="url(#gr)" stroke-width="3.600"/><circle cx="63" cy="11" r="2.300" fill="#fafafa"/>
<!-- swirl -->
<ellipse cx="86" cy="12.500" rx="7.500" ry="4.600" fill="none" stroke="#9a8cf0" stroke-width="1.300" transform="rotate(-25 86 12.500)"/><path d="M82,17.500 Q86,10 90,3.500 M84.500,16 Q89,11 91.500,6" stroke="#5a4fd0" stroke-width="1.300" fill="none"/><path d="M80,14 Q86,8 92,8" stroke="#b9b0f6" stroke-width="1" fill="none"/>
<path d="M101.500,4V20" stroke="#c2c2c2"/>
<!-- cards -->
<rect x="107.500" y="3.500" width="8" height="9" fill="#fbfcff" stroke="#5a6fa8"/><path d="M110.500,5.500 L112,5 V10" stroke="#111" stroke-width="1.200" fill="none"/>
<rect x="109.500" y="8.500" width="9" height="10" fill="#fbfcff" stroke="#5a6fa8"/>
<text x="111.300" y="17" font-family="Liberation Sans, sans-serif" font-size="8.500" font-weight="700" fill="#d01818">2</text>
<text x="117.800" y="9.500" font-family="Liberation Sans, sans-serif" font-size="9" font-weight="700" fill="#1a3fc0">?</text>
<!-- sneakers -->
<path d="M130.500,16.500 Q131,13 134,11 L136.500,4 L140,4.500 L140.500,12 L141,17 Q136,18.500 130.500,16.500Z" fill="#d62828"/>
<path d="M138,6 L141.500,5 L144,7 L144.500,18.500 L139.500,18.500 Z" fill="#c41e1e"/>
<path d="M134.500,11.500 L137,12.500 M135.500,9 L138,10 M140.500,9 H143.500 M140.500,12 H143.500 M140.500,15 H143.500" stroke="#ffd8d8" stroke-width="1"/>
<path d="M130.500,16.800 Q136,19 141,17.300" stroke="#f4f4f4" stroke-width="1.200" fill="none"/>
<!-- clock -->
<circle cx="160.500" cy="11.500" r="7.600" fill="#8a98a8"/><circle cx="160.500" cy="11.500" r="6.400" fill="url(#ck)"/><path d="M160.500,6.800V11.500L164,14" stroke="#fff" stroke-width="1.300" fill="none"/>
<!-- shield -->
<path d="M176,6 Q183.500,3 191,6 Q190.500,14.500 183.500,19.500 Q176.500,14.500 176,6Z" fill="#c9ccd2" stroke="#8e949e" stroke-width="0.800"/><path d="M177.300,7 Q183.500,5 189.700,7 L189.300,10.500 Q183.500,9 177.700,10.500Z" fill="#4c7cc8"/><path d="M183.500,5.500 Q187,5.600 189.700,7 Q189,14 183.500,18.300Z" fill="#e6e8ec" opacity="0.550"/>
<!-- network -->
<path d="M207.300,5.500 L201.700,15.400 L212,15.400Z" fill="none" stroke="#6a6a6a" stroke-width="1.200"/><circle cx="207.300" cy="5.200" r="2.600" fill="url(#bb)"/><circle cx="201.700" cy="15.600" r="2.600" fill="url(#br)"/><circle cx="212.200" cy="15.600" r="2.600" fill="url(#bg)"/>
<!-- hand -->
<path d="M229,7 L234.500,8 L235.500,15.500 L231,16.500Z" fill="#4a78c8"/>
<path d="M221.500,5 L223.500,4.200 L226.500,8 L231,8 L232.500,15 L229,18 L224.500,17.500 L221.500,13.500 L222.500,10.500 L223.800,9.500 Z" fill="#f0935a" stroke="#b85a28" stroke-width="0.700"/>
<path d="M224.500,11.500 L229,10.500 M224.500,13.500 L229.500,12.800 M225.500,15.500 L229.500,15" stroke="#c86a38" stroke-width="0.700"/>
<path d="M243,10.500 L249,10.500 L246,14Z" fill="#000"/>
<path d="M254.500,4V20" stroke="#c2c2c2"/>
<!-- picture -->
<rect x="260.500" y="5.500" width="15" height="12" fill="#fdfdfd" stroke="#7a7a7a" stroke-width="1.200"/><path d="M262.500,8.500H273.500M262.500,11.500H273.500M266,7V15M270,7V15" stroke="#d8d8d8" stroke-width="0.700"/><path d="M262.500,13.500 L265.500,11.500 L268,9.500 L270.500,11 L273.500,10" stroke="#2a7ad0" stroke-width="1.100" fill="none"/><circle cx="267.800" cy="9.800" r="1.100" fill="#2aa02a"/><circle cx="263" cy="13.300" r="1" fill="#e03030"/><path d="M262.500,15.500H273.500" stroke="#2a4fd0" stroke-width="1"/>
<!-- overflow -->
<path d="M295,12 H305 V20 L302,23 H295Z" fill="#d2d2d2"/><path d="M297,14.500H302.500" stroke="#000" stroke-width="1.300"/><path d="M296.500,17 L303,17 L299.750,21Z" fill="#000"/>
</svg>
<span class="t" style="left:1296.00px;top:108.50px;font-size:12.5px;line-height:16px;color:#000;transform:scaleX(0.8727);">Qty:</span>
<div style="left:1324px;top:103px;width:59px;height:21px;background:#fff;border:1px solid #abadb3;"></div>
<span class="t" style="left:1357.05px;top:104.50px;font-size:12.5px;line-height:16px;color:#000;">1</span>
<div style="left:1366.5px;top:104px;width:15px;height:19px;background:#f0f0f0;border-left:1px solid #c8c8c8;"></div>
<div style="left:1366.5px;top:113.2px;width:15px;height:1px;background:#c8c8c8;"></div>
<svg style="left:1369px;top:105px" width="10" height="17" viewBox="0 0 10 17"><path d="M2,6 L5,2.2 L8,6Z M2,11 L5,14.8 L8,11Z" fill="#000"/></svg>
<span class="t" style="left:1416.00px;top:108.50px;font-size:12.5px;line-height:16px;color:#000;transform:scaleX(0.9499);">Total P/L:</span>
<div style="left:1474px;top:103px;width:117px;height:21px;background:#fff;border:1px solid #abadb3;"></div>
<span class="t" style="left:1539.00px;top:105.50px;font-size:12.5px;line-height:16px;color:#f01010;transform:scaleX(0.9828);">$-520.00</span>
<span class="t" style="left:1296.00px;top:139.50px;font-size:12.5px;line-height:16px;color:#000;">Pos:</span>
<div style="left:1328.5px;top:135px;width:51.5px;height:21px;background:#fff;border:1px solid #abadb3;"></div>
<span class="t" style="left:1369.25px;top:137.50px;font-size:12.5px;line-height:16px;color:#000;">0</span>
<div style="left:1388.5px;top:136px;width:99px;height:22.5px;background:linear-gradient(#f4f4f4,#e3e3e3);border:1px solid #a6a6a6;"></div>
<span class="t" style="left:1396.00px;top:139.75px;font-size:12.5px;line-height:16px;color:#000;transform:scaleX(0.9162);">Exit at Mkt &amp; Cxl</span>
<div style="left:1497.5px;top:136px;width:92px;height:22.5px;background:linear-gradient(#f4f4f4,#e3e3e3);border:1px solid #c4c4c4;"></div>
<span class="t" style="left:1504.05px;top:139.75px;font-size:12.5px;line-height:16px;color:#9a9a9a;transform:scaleX(0.9702);">Reverse &amp; Cxl</span>
<div style="left:1294px;top:167px;width:90px;height:24.5px;background:linear-gradient(#f4f4f4,#e3e3e3);border:1px solid #a6a6a6;"></div>
<span class="t" style="left:1305.00px;top:171.75px;font-size:12.5px;line-height:16px;color:#000;transform:scaleX(0.9895);">Cancel Bids</span>
<div style="left:1394px;top:167px;width:93.5px;height:24.5px;background:linear-gradient(#f4f4f4,#e3e3e3);border:1px solid #a6a6a6;"></div>
<span class="t" style="left:1413.00px;top:171.75px;font-size:12.5px;line-height:16px;color:#000;transform:scaleX(0.9625);">Cancel All</span>
<div style="left:1497.5px;top:167px;width:92px;height:24.5px;background:linear-gradient(#f4f4f4,#e3e3e3);border:1px solid #c4c4c4;"></div>
<span class="t" style="left:1505.50px;top:171.75px;font-size:12.5px;line-height:16px;color:#9a9a9a;transform:scaleX(0.9713);">Cancel Offers</span>
<div style="left:1293px;top:199.5px;width:297px;height:160.5px;background:#f0f0f0;border:1px solid #9a9a9a;"></div>
<div style="left:1294px;top:200.5px;width:85px;height:25px;background:#006400;"></div>
<div style="left:1505px;top:200.5px;width:84.5px;height:25px;background:#800000;"></div>
<span class="t" style="left:1327.97px;top:205.50px;font-size:12.5px;line-height:16px;color:#fff;">Bid</span>
<span class="t" style="left:1536.58px;top:205.50px;font-size:12.5px;line-height:16px;color:#fff;">Ask</span>
<svg style="left:1436px;top:208px" width="11" height="7" viewBox="0 0 11 7"><path d="M0.5,6.5 L5.5,0.8 L10.5,6.5Z" fill="#000"/></svg>
<div style="left:1294px;top:225px;width:44px;height:21px;background:#fff;"></div>
<div style="left:1338px;top:225px;width:41px;height:21px;background:#006400;"></div>
<div style="left:1379px;top:225px;width:40.5px;height:21px;background:#d3d3d3;"></div>
<div style="left:1420px;top:225px;width:85px;height:21px;background:#d3d3d3;"></div>
<div style="left:1505px;top:225px;width:41px;height:21px;background:#800000;"></div>
<div style="left:1546px;top:225px;width:43.5px;height:21px;background:#fff;"></div>
<div style="left:1294px;top:225px;width:295.5px;height:1px;background:#bdbdbd;"></div>
<div style="left:1419.5px;top:225px;width:1px;height:21px;background:#c2c2c2;"></div>
<span class="t" style="left:1445.00px;top:226.00px;font-size:15px;line-height:20px;color:#000;font-weight:700;-webkit-text-stroke:0.25px #000;transform:scaleX(0.8391);">17094</span>
<span class="t" style="left:1518.33px;top:226.00px;font-size:15px;line-height:20px;color:#fff;font-weight:700;-webkit-text-stroke:0.25px #fff;transform:scaleX(0.8600);">18</span>
<div style="left:1294px;top:246px;width:44px;height:21px;background:#fff;"></div>
<div style="left:1338px;top:246px;width:41px;height:21px;background:#006400;"></div>
<div style="left:1379px;top:246px;width:40.5px;height:21px;background:#d3d3d3;"></div>
<div style="left:1420px;top:246px;width:85px;height:21px;background:#d3d3d3;"></div>
<div style="left:1505px;top:246px;width:41px;height:21px;background:#800000;"></div>
<div style="left:1546px;top:246px;width:43.5px;height:21px;background:#fff;"></div>
<div style="left:1294px;top:246px;width:295.5px;height:1px;background:#bdbdbd;"></div>
<div style="left:1419.5px;top:246px;width:1px;height:21px;background:#c2c2c2;"></div>
<span class="t" style="left:1445.00px;top:247.00px;font-size:15px;line-height:20px;color:#000;font-weight:700;-webkit-text-stroke:0.25px #000;transform:scaleX(0.8391);">17093</span>
<span class="t" style="left:1518.68px;top:247.00px;font-size:15px;line-height:20px;color:#fff;font-weight:700;-webkit-text-stroke:0.25px #fff;transform:scaleX(0.8600);">11</span>
<div style="left:1294px;top:267px;width:44px;height:21px;background:#fff;"></div>
<div style="left:1338px;top:267px;width:41px;height:21px;background:#006400;"></div>
<div style="left:1379px;top:267px;width:40.5px;height:21px;background:#ffffe1;"></div>
<div style="left:1420px;top:267px;width:85px;height:21px;background:#ffffe1;"></div>
<div style="left:1505px;top:267px;width:41px;height:21px;background:#800000;"></div>
<div style="left:1546px;top:267px;width:43.5px;height:21px;background:#fff;"></div>
<div style="left:1294px;top:267px;width:295.5px;height:1px;background:#bdbdbd;"></div>
<div style="left:1419.5px;top:267px;width:1px;height:21px;background:#c2c2c2;"></div>
<span class="t" style="left:1445.00px;top:268.00px;font-size:15px;line-height:20px;color:#ff0000;font-weight:700;-webkit-text-stroke:0.25px #ff0000;transform:scaleX(0.8391);">17092</span>
<span class="t" style="left:1521.91px;top:268.00px;font-size:15px;line-height:20px;color:#fff;font-weight:700;-webkit-text-stroke:0.25px #fff;transform:scaleX(0.8600);">4</span>
<div style="left:1294px;top:288px;width:44px;height:21px;background:#fff;"></div>
<div style="left:1338px;top:288px;width:41px;height:21px;background:#006400;"></div>
<div style="left:1379px;top:288px;width:40.5px;height:21px;background:#d3d3d3;"></div>
<div style="left:1420px;top:288px;width:85px;height:21px;background:#d3d3d3;"></div>
<div style="left:1505px;top:288px;width:41px;height:21px;background:#800000;"></div>
<div style="left:1546px;top:288px;width:43.5px;height:21px;background:#fff;"></div>
<div style="left:1294px;top:288px;width:295.5px;height:1px;background:#bdbdbd;"></div>
<div style="left:1419.5px;top:288px;width:1px;height:21px;background:#c2c2c2;"></div>
<span class="t" style="left:1445.00px;top:289.00px;font-size:15px;line-height:20px;color:#008000;font-weight:700;-webkit-text-stroke:0.25px #008000;transform:scaleX(0.8391);">17091</span>
<span class="t" style="left:1358.33px;top:289.00px;font-size:15px;line-height:20px;color:#fff;font-weight:700;-webkit-text-stroke:0.25px #fff;transform:scaleX(0.8600);">9</span>
<div style="left:1294px;top:309px;width:44px;height:21px;background:#fff;"></div>
<div style="left:1338px;top:309px;width:41px;height:21px;background:#006400;"></div>
<div style="left:1379px;top:309px;width:40.5px;height:21px;background:#d3d3d3;"></div>
<div style="left:1420px;top:309px;width:85px;height:21px;background:#d3d3d3;"></div>
<div style="left:1505px;top:309px;width:41px;height:21px;background:#800000;"></div>
<div style="left:1546px;top:309px;width:43.5px;height:21px;background:#fff;"></div>
<div style="left:1294px;top:309px;width:295.5px;height:1px;background:#bdbdbd;"></div>
<div style="left:1419.5px;top:309px;width:1px;height:21px;background:#c2c2c2;"></div>
<span class="t" style="left:1445.00px;top:310.00px;font-size:15px;line-height:20px;color:#000;font-weight:700;-webkit-text-stroke:0.25px #000;transform:scaleX(0.8391);">17090</span>
<span class="t" style="left:1351.15px;top:310.00px;font-size:15px;line-height:20px;color:#fff;font-weight:700;-webkit-text-stroke:0.25px #fff;transform:scaleX(0.8600);">19</span>
<div style="left:1379px;top:267px;width:41px;height:21.5px;border:1.5px solid #000;background:#ffffe1;"></div>
<span class="t" style="left:1395.91px;top:268.00px;font-size:15px;line-height:20px;color:#000;font-weight:700;-webkit-text-stroke:0.25px #000;transform:scaleX(0.8600);">1</span>
<div style="left:1294px;top:330px;width:44px;height:5px;background:#fff;"></div>
<div style="left:1546px;top:330px;width:43.5px;height:5px;background:#fff;"></div>
<div style="left:1338px;top:330px;width:41px;height:5px;background:#006400;"></div>
<div style="left:1505px;top:330px;width:41px;height:5px;background:#800000;"></div>
<div style="left:1379px;top:330px;width:126px;height:5px;background:#d3d3d3;"></div>
<div style="left:1294px;top:330px;width:295.5px;height:1px;background:#bdbdbd;"></div>
<div style="left:1419.5px;top:330px;width:1px;height:5px;background:#c2c2c2;"></div>
<div style="left:1294px;top:335px;width:85px;height:24px;background:#006400;"></div>
<div style="left:1505px;top:335px;width:84.5px;height:24px;background:#800000;"></div>
<span class="t" style="left:1322.41px;top:339.50px;font-size:12.5px;line-height:16px;color:#fff;">1 Stp</span>
<svg style="left:1436px;top:344px" width="11" height="7" viewBox="0 0 11 7"><path d="M0.5,0.5 L5.5,6.2 L10.5,0.5Z" fill="#000"/></svg>
<div style="left:1294px;top:368px;width:90px;height:24px;background:linear-gradient(#f4f4f4,#e3e3e3);border:1px solid #a6a6a6;"></div>
<span class="t" style="left:1318.25px;top:372.50px;font-size:12.5px;line-height:16px;color:#000;transform:scaleX(0.9192);">Buy Mkt</span>
<div style="left:1394px;top:368px;width:94px;height:24px;background:linear-gradient(#f4f4f4,#e3e3e3);border:1px solid #a6a6a6;"></div>
<span class="t" style="left:1412.75px;top:372.50px;font-size:12.5px;line-height:16px;color:#000;transform:scaleX(0.9797);">Go to Last</span>
<div style="left:1498px;top:368px;width:92px;height:24px;background:linear-gradient(#f4f4f4,#e3e3e3);border:1px solid #a6a6a6;"></div>
<span class="t" style="left:1522.75px;top:372.50px;font-size:12.5px;line-height:16px;color:#000;transform:scaleX(0.9561);">Sell Mkt</span>
<div style="left:3px;top:466px;width:1600px;height:321.4px;background:#f38273;border:1px solid #dd6a5c;"></div>
<div style="left:10px;top:496px;width:1589px;height:285px;border:1px solid #de6c5f;"></div>
<div style="left:11px;top:497px;width:1587px;height:283px;background:#f0f0f0;"></div>
<div style="left:11px;top:497px;width:1587px;height:18.5px;background:#f5f6f7;border-bottom:1px solid #e9e9e9;"></div>
<svg style="left:13px;top:474px" width="16" height="14" viewBox="0 0 16 14"><rect x="0.5" y="0.5" width="15" height="13" rx="1.5" fill="#e9e4e4" stroke="#cfc0c0"/><rect x="2" y="3" width="5.5" height="8" fill="#3f8f86"/><rect x="8.5" y="3" width="3" height="8" fill="#c9d6e6"/><rect x="12.2" y="3" width="2" height="4" fill="#5aa08a"/></svg>
<span class="t" style="left:745.00px;top:471.80px;font-size:15px;line-height:20px;color:#2f343a;transform:scaleX(1.0112);">Trade Activity Log</span>
<div style="left:1511px;top:479.3px;width:8px;height:2px;background:#000;"></div>
<div style="left:1536.3px;top:473px;width:11px;height:8.3px;border:1px solid #000;border-top-width:2.5px;"></div>
<div style="left:1554.5px;top:467px;width:46px;height:19.5px;background:#c84f4f;"></div>
<svg style="left:1571px;top:472px" width="12" height="11" viewBox="0 0 12 11"><path d="M1.5,1 L10.5,10 M10.5,1 L1.5,10" stroke="#fff" stroke-width="1.7" fill="none"/></svg>
<span class="t" style="left:18.00px;top:498.60px;font-size:12px;line-height:16px;color:#000;transform:scaleX(0.9309);">File</span>
<span class="t" style="left:50.00px;top:498.60px;font-size:12px;line-height:16px;color:#000;transform:scaleX(0.9430);">Edit</span>
<span class="t" style="left:84.00px;top:498.60px;font-size:12px;line-height:16px;color:#000;transform:scaleX(1.0309);">Window</span>
<div style="left:23px;top:517.5px;width:121px;height:22.5px;background:#f0f0f0;border:1px solid #989898;border-right-color:#fff;border-bottom-color:#fff;"></div>
<div style="left:24px;top:518.5px;width:119px;height:20.5px;border:1px solid #5c5c5c;border-right-color:#e3e3e3;border-bottom-color:#e3e3e3;"></div>
<div style="left:125px;top:519.5px;width:17px;height:18.5px;background:#f0f0f0;border:1px solid #fff;border-right-color:#696969;border-bottom-color:#696969;"></div>
<div style="left:126px;top:520.5px;width:15px;height:16.5px;border:1px solid #f0f0f0;border-right-color:#a0a0a0;border-bottom-color:#a0a0a0;"></div>
<svg style="left:129.5px;top:526.5px" width="8" height="5" viewBox="0 0 8 5"><path d="M0.3,0.5 L7.7,0.5 L4,4.6Z" fill="#a0a0a0"/></svg>
<span class="t" style="left:27.00px;top:519.85px;font-size:14px;line-height:18px;color:#8c8c8c;transform:scaleX(0.9522);">All Activity</span>
<div style="left:157px;top:517.5px;width:179px;height:22.5px;background:#fff;border:1px solid #989898;border-right-color:#fff;border-bottom-color:#fff;"></div>
<div style="left:158px;top:518.5px;width:177px;height:20.5px;border:1px solid #5c5c5c;border-right-color:#e3e3e3;border-bottom-color:#e3e3e3;"></div>
<div style="left:317px;top:519.5px;width:17px;height:18.5px;background:#f0f0f0;border:1px solid #fff;border-right-color:#696969;border-bottom-color:#696969;"></div>
<div style="left:318px;top:520.5px;width:15px;height:16.5px;border:1px solid #f0f0f0;border-right-color:#a0a0a0;border-bottom-color:#a0a0a0;"></div>
<svg style="left:321.5px;top:526.5px" width="8" height="5" viewBox="0 0 8 5"><path d="M0.3,0.5 L7.7,0.5 L4,4.6Z" fill="#000"/></svg>
<span class="t" style="left:161.00px;top:519.85px;font-size:14px;line-height:18px;color:#000;transform:scaleX(0.9557);">Non-Simulated</span>
<div style="left:349px;top:517.5px;width:179px;height:22.5px;background:#fff;border:1px solid #989898;border-right-color:#fff;border-bottom-color:#fff;"></div>
<div style="left:350px;top:518.5px;width:177px;height:20.5px;border:1px solid #5c5c5c;border-right-color:#e3e3e3;border-bottom-color:#e3e3e3;"></div>
<div style="left:509px;top:519.5px;width:17px;height:18.5px;background:#f0f0f0;border:1px solid #fff;border-right-color:#696969;border-bottom-color:#696969;"></div>
<div style="left:510px;top:520.5px;width:15px;height:16.5px;border:1px solid #f0f0f0;border-right-color:#a0a0a0;border-bottom-color:#a0a0a0;"></div>
<svg style="left:513.5px;top:526.5px" width="8" height="5" viewBox="0 0 8 5"><path d="M0.3,0.5 L7.7,0.5 L4,4.6Z" fill="#000"/></svg>
<span class="t" style="left:353.00px;top:519.85px;font-size:14px;line-height:18px;color:#000;transform:scaleX(0.9122);">YMM16</span>
<div style="left:541px;top:517.5px;width:121px;height:22.5px;background:#fff;border:1px solid #989898;border-right-color:#fff;border-bottom-color:#fff;"></div>
<div style="left:542px;top:518.5px;width:119px;height:20.5px;border:1px solid #5c5c5c;border-right-color:#e3e3e3;border-bottom-color:#e3e3e3;"></div>
<div style="left:643px;top:519.5px;width:17px;height:18.5px;background:#f0f0f0;border:1px solid #fff;border-right-color:#696969;border-bottom-color:#696969;"></div>
<div style="left:644px;top:520.5px;width:15px;height:16.5px;border:1px solid #f0f0f0;border-right-color:#a0a0a0;border-bottom-color:#a0a0a0;"></div>
<svg style="left:647.5px;top:526.5px" width="8" height="5" viewBox="0 0 8 5"><path d="M0.3,0.5 L7.7,0.5 L4,4.6Z" fill="#000"/></svg>
<div style="left:544px;top:520.0px;width:98.5px;height:17.5px;background:#3399ff;"></div>
<span class="t" style="left:545.00px;top:519.85px;font-size:14px;line-height:18px;color:#fff;transform:scaleX(0.9243);">DEMO060385</span>
<div style="left:675px;top:517.5px;width:121px;height:22.5px;background:#fff;border:1px solid #989898;border-right-color:#fff;border-bottom-color:#fff;"></div>
<div style="left:676px;top:518.5px;width:119px;height:20.5px;border:1px solid #5c5c5c;border-right-color:#e3e3e3;border-bottom-color:#e3e3e3;"></div>
<div style="left:777px;top:519.5px;width:17px;height:18.5px;background:#f0f0f0;border:1px solid #fff;border-right-color:#696969;border-bottom-color:#696969;"></div>
<div style="left:778px;top:520.5px;width:15px;height:16.5px;border:1px solid #f0f0f0;border-right-color:#a0a0a0;border-bottom-color:#a0a0a0;"></div>
<svg style="left:781.5px;top:526.5px" width="8" height="5" viewBox="0 0 8 5"><path d="M0.3,0.5 L7.7,0.5 L4,4.6Z" fill="#000"/></svg>
<span class="t" style="left:679.00px;top:519.85px;font-size:14px;line-height:18px;color:#000;transform:scaleX(0.9300);">Long &amp; Short</span>
<div style="left:809px;top:517.5px;width:121px;height:22.5px;background:#fff;border:1px solid #989898;border-right-color:#fff;border-bottom-color:#fff;"></div>
<div style="left:810px;top:518.5px;width:119px;height:20.5px;border:1px solid #5c5c5c;border-right-color:#e3e3e3;border-bottom-color:#e3e3e3;"></div>
<div style="left:911px;top:519.5px;width:17px;height:18.5px;background:#f0f0f0;border:1px solid #fff;border-right-color:#696969;border-bottom-color:#696969;"></div>
<div style="left:912px;top:520.5px;width:15px;height:16.5px;border:1px solid #f0f0f0;border-right-color:#a0a0a0;border-bottom-color:#a0a0a0;"></div>
<svg style="left:915.5px;top:526.5px" width="8" height="5" viewBox="0 0 8 5"><path d="M0.3,0.5 L7.7,0.5 L4,4.6Z" fill="#000"/></svg>
<span class="t" style="left:813.00px;top:519.85px;font-size:14px;line-height:18px;color:#000;">Daily</span>
<div style="left:19px;top:548.8px;width:786.5px;height:43px;border:1px solid #b9b9b9;box-shadow:1px 1px 0 #fff, inset 1px 1px 0 #fff;"></div>
<div style="left:25px;top:541px;width:248px;height:16px;background:#f0f0f0;"></div>
<span class="t" style="left:28.00px;top:540.00px;font-size:14px;line-height:18px;color:#000;transform:scaleX(0.9579);">Date Range to Display and Commission:</span>
<span class="t" style="left:23.00px;top:566.00px;font-size:14px;line-height:18px;color:#000;transform:scaleX(0.9302);">From:</span>
<div style="left:65px;top:563.5px;width:109px;height:22.5px;background:#fff;border:1px solid #989898;border-right-color:#fff;border-bottom-color:#fff;"></div>
<div style="left:66px;top:564.5px;width:107px;height:20.5px;border:1px solid #5c5c5c;border-right-color:#e3e3e3;border-bottom-color:#e3e3e3;"></div>
<div style="left:155px;top:565.5px;width:17px;height:18.5px;background:#f0f0f0;border:1px solid #fff;border-right-color:#696969;border-bottom-color:#696969;"></div>
<div style="left:156px;top:566.5px;width:15px;height:16.5px;border:1px solid #f0f0f0;border-right-color:#a0a0a0;border-bottom-color:#a0a0a0;"></div>
<svg style="left:159.5px;top:572.5px" width="8" height="5" viewBox="0 0 8 5"><path d="M0.3,0.5 L7.7,0.5 L4,4.6Z" fill="#000"/></svg>
<span class="t" style="left:69.00px;top:565.85px;font-size:14px;line-height:18px;color:#000;transform:scaleX(0.9199);">11/03/2016</span>
<div style="left:181px;top:563.5px;width:91px;height:22.5px;background:#fff;border:1px solid #989898;border-right-color:#fff;border-bottom-color:#fff;"></div>
<div style="left:182px;top:564.5px;width:89px;height:20.5px;border:1px solid #5c5c5c;border-right-color:#e3e3e3;border-bottom-color:#e3e3e3;"></div>
<div style="left:253px;top:565.5px;width:17px;height:9px;background:#f0f0f0;border:1px solid #fff;border-right-color:#8a8a8a;border-bottom-color:#8a8a8a;"></div>
<svg style="left:258.5px;top:568.0px" width="6" height="4" viewBox="0 0 6 4"><path d="M1,3.5 L3,1 L5,3.5Z" fill="#000"/></svg>
<div style="left:253px;top:574.5px;width:17px;height:9px;background:#f0f0f0;border:1px solid #fff;border-right-color:#8a8a8a;border-bottom-color:#8a8a8a;"></div>
<svg style="left:258.5px;top:577.0px" width="6" height="4" viewBox="0 0 6 4"><path d="M1,1 L5,1 L3,3.5Z" fill="#000"/></svg>
<span class="t" style="left:185.00px;top:565.85px;font-size:14px;line-height:18px;color:#000;transform:scaleX(0.8808);">00:00:00</span>
<span class="t" style="left:280.00px;top:566.00px;font-size:14px;line-height:18px;color:#000;transform:scaleX(0.9906);">To:</span>
<div style="left:310.5px;top:567px;width:13px;height:13px;background:#fff;border:1px solid #989898;border-right-color:#fff;border-bottom-color:#fff;"></div>
<div style="left:311.5px;top:568px;width:11px;height:11px;border:1px solid #5c5c5c;border-right-color:#e3e3e3;border-bottom-color:#e3e3e3;"></div>
<svg style="left:313.0px;top:569.5px" width="8" height="8" viewBox="0 0 8 8"><path d="M0.8,3.6 L3,5.8 L7.2,1.2" stroke="#000" stroke-width="2" fill="none"/></svg>
<span class="t" style="left:330.00px;top:564.50px;font-size:14px;line-height:18px;color:#000;transform:scaleX(1.0439);">Today</span>
<div style="left:381px;top:563.5px;width:110.5px;height:22.5px;background:#fff;border:1px solid #989898;border-right-color:#fff;border-bottom-color:#fff;"></div>
<div style="left:382px;top:564.5px;width:108.5px;height:20.5px;border:1px solid #5c5c5c;border-right-color:#e3e3e3;border-bottom-color:#e3e3e3;"></div>
<div style="left:472.5px;top:565.5px;width:17px;height:18.5px;background:#f0f0f0;border:1px solid #fff;border-right-color:#696969;border-bottom-color:#696969;"></div>
<div style="left:473.5px;top:566.5px;width:15px;height:16.5px;border:1px solid #f0f0f0;border-right-color:#a0a0a0;border-bottom-color:#a0a0a0;"></div>
<svg style="left:477.0px;top:572.5px" width="8" height="5" viewBox="0 0 8 5"><path d="M0.3,0.5 L7.7,0.5 L4,4.6Z" fill="#000"/></svg>
<span class="t" style="left:385.00px;top:565.85px;font-size:14px;line-height:18px;color:#000;transform:scaleX(0.9063);">31/12/9999</span>
<div style="left:499px;top:563.5px;width:91px;height:22.5px;background:#fff;border:1px solid #989898;border-right-color:#fff;border-bottom-color:#fff;"></div>
<div style="left:500px;top:564.5px;width:89px;height:20.5px;border:1px solid #5c5c5c;border-right-color:#e3e3e3;border-bottom-color:#e3e3e3;"></div>
<div style="left:571px;top:565.5px;width:17px;height:9px;background:#f0f0f0;border:1px solid #fff;border-right-color:#8a8a8a;border-bottom-color:#8a8a8a;"></div>
<svg style="left:576.5px;top:568.0px" width="6" height="4" viewBox="0 0 6 4"><path d="M1,3.5 L3,1 L5,3.5Z" fill="#000"/></svg>
<div style="left:571px;top:574.5px;width:17px;height:9px;background:#f0f0f0;border:1px solid #fff;border-right-color:#8a8a8a;border-bottom-color:#8a8a8a;"></div>
<svg style="left:576.5px;top:577.0px" width="6" height="4" viewBox="0 0 6 4"><path d="M1,1 L5,1 L3,3.5Z" fill="#000"/></svg>
<span class="t" style="left:503.00px;top:565.85px;font-size:14px;line-height:18px;color:#000;transform:scaleX(0.8808);">00:00:00</span>
<div style="left:597px;top:567px;width:13px;height:13px;background:#fff;border:1px solid #989898;border-right-color:#fff;border-bottom-color:#fff;"></div>
<div style="left:598px;top:568px;width:11px;height:11px;border:1px solid #5c5c5c;border-right-color:#e3e3e3;border-bottom-color:#e3e3e3;"></div>
<span class="t" style="left:615.00px;top:564.50px;font-size:14px;line-height:18px;color:#000;transform:scaleX(0.9641);">Use Commission</span>
<div style="left:739px;top:559px;width:58.5px;height:24px;background:#f0f0f0;border:1px solid #fff;border-right-color:#696969;border-bottom-color:#696969;"></div>
<div style="left:740px;top:560px;width:56.5px;height:22px;border:1px solid #f0f0f0;border-right-color:#a0a0a0;border-bottom-color:#a0a0a0;"></div>
<span class="t" style="left:751.00px;top:561.40px;font-size:14px;line-height:18px;color:#000;">Apply</span>
<svg style="left:817px;top:552.5px" width="14" height="14" viewBox="0 0 14 14"><circle cx="7" cy="7" r="5.6" fill="#fff" stroke="#e8e8e8" stroke-width="1.6"/><path d="M2.8,11.2 A6,6 0 0 1 11.2,2.8" fill="none" stroke="#808080" stroke-width="1.3"/><path d="M3.7,10.3 A4.7,4.7 0 0 1 10.3,3.7" fill="none" stroke="#505050" stroke-width="1"/><circle cx="7" cy="7" r="2.1" fill="#000"/></svg>
<span class="t" style="left:835.00px;top:550.80px;font-size:14px;line-height:18px;color:#000;transform:scaleX(0.9814);">Fill To Fill</span>
<svg style="left:817px;top:574.5px" width="14" height="14" viewBox="0 0 14 14"><circle cx="7" cy="7" r="5.6" fill="#fff" stroke="#e8e8e8" stroke-width="1.6"/><path d="M2.8,11.2 A6,6 0 0 1 11.2,2.8" fill="none" stroke="#808080" stroke-width="1.3"/><path d="M3.7,10.3 A4.7,4.7 0 0 1 10.3,3.7" fill="none" stroke="#505050" stroke-width="1"/></svg>
<span class="t" style="left:835.00px;top:572.60px;font-size:14px;line-height:18px;color:#000;transform:scaleX(0.9784);">Flat To Flat</span>
<span class="t" style="left:921.00px;top:543.80px;font-size:14px;line-height:18px;color:#000;transform:scaleX(0.9227);">P/L Format:</span>
<div style="left:917px;top:567.5px;width:159px;height:22.5px;background:#fff;border:1px solid #989898;border-right-color:#fff;border-bottom-color:#fff;"></div>
<div style="left:918px;top:568.5px;width:157px;height:20.5px;border:1px solid #5c5c5c;border-right-color:#e3e3e3;border-bottom-color:#e3e3e3;"></div>
<div style="left:1057px;top:569.5px;width:17px;height:18.5px;background:#f0f0f0;border:1px solid #fff;border-right-color:#696969;border-bottom-color:#696969;"></div>
<div style="left:1058px;top:570.5px;width:15px;height:16.5px;border:1px solid #f0f0f0;border-right-color:#a0a0a0;border-bottom-color:#a0a0a0;"></div>
<svg style="left:1061.5px;top:576.5px" width="8" height="5" viewBox="0 0 8 5"><path d="M0.3,0.5 L7.7,0.5 L4,4.6Z" fill="#000"/></svg>
<span class="t" style="left:921.00px;top:569.85px;font-size:14px;line-height:18px;color:#000;transform:scaleX(0.9303);">Currency Value (C)</span>
<div style="left:26px;top:603px;width:92.5px;height:22px;background:#f0f0f0;border-left:1px solid #fff;border-top:1px solid #fff;border-right:2px solid #7a7a7a;"></div>
<span class="t" style="left:32.00px;top:605.20px;font-size:14px;line-height:18px;color:#000;transform:scaleX(0.9640);">Trade Activity</span>
<div style="left:120px;top:603px;width:103px;height:22px;background:#f0f0f0;border-left:1px solid #fff;border-top:1px solid #fff;border-right:2px solid #7a7a7a;"></div>
<span class="t" style="left:126.00px;top:605.20px;font-size:14px;line-height:18px;color:#000;transform:scaleX(0.9483);">Trade Statistics</span>
<div style="left:225px;top:603px;width:53.5px;height:22px;background:#f0f0f0;border-left:1px solid #fff;border-top:1px solid #fff;border-right:2px solid #f0f0f0;"></div>
<span class="t" style="left:231.00px;top:605.20px;font-size:14px;line-height:18px;color:#000;transform:scaleX(0.9755);">Trades</span>
<div style="left:406px;top:603px;width:139.5px;height:22px;background:#f0f0f0;border-left:1px solid #fff;border-top:1px solid #fff;border-right:2px solid #7a7a7a;"></div>
<span class="t" style="left:412.00px;top:605.20px;font-size:14px;line-height:18px;color:#000;transform:scaleX(0.9257);">Trade Stats for Charts</span>
<div style="left:24px;top:624.3px;width:1562.5px;height:143.7px;background:#f0f0f0;border:1px solid #fff;border-right:2px solid #6e6e6e;border-bottom:2px solid #6e6e6e;"></div>
<div style="left:279px;top:600px;width:127.5px;height:25.8px;background:#f0f0f0;border-left:1px solid #fff;border-top:1px solid #fff;border-right:2px solid #7a7a7a;"></div>
<span class="t" style="left:286.00px;top:602.80px;font-size:14px;line-height:18px;color:#000;transform:scaleX(0.9659);">Period Trade Stats</span>
<div style="left:37px;top:638px;width:1536px;height:116px;background:#fff;"></div>
<div style="left:37px;top:638px;width:1536px;height:25px;background:#f0f0f0;border-top:1px solid #fbfbfb;"></div>
<div style="left:136.7px;top:638px;width:1.2px;height:116px;background:#9c9c9c;"></div>
<div style="left:236.7px;top:638px;width:1.2px;height:116px;background:#9c9c9c;"></div>
<div style="left:336.7px;top:638px;width:1.2px;height:116px;background:#9c9c9c;"></div>
<div style="left:436.7px;top:638px;width:1.2px;height:116px;background:#9c9c9c;"></div>
<div style="left:536.7px;top:638px;width:1.2px;height:116px;background:#9c9c9c;"></div>
<div style="left:636.7px;top:638px;width:1.2px;height:116px;background:#9c9c9c;"></div>
<div style="left:736.7px;top:638px;width:1.2px;height:116px;background:#9c9c9c;"></div>
<div style="left:836.7px;top:638px;width:1.2px;height:116px;background:#9c9c9c;"></div>
<div style="left:936.7px;top:638px;width:1.2px;height:116px;background:#9c9c9c;"></div>
<div style="left:1036.7px;top:638px;width:1.2px;height:116px;background:#9c9c9c;"></div>
<div style="left:1136.7px;top:638px;width:1.2px;height:116px;background:#9c9c9c;"></div>
<div style="left:1236.7px;top:638px;width:1.2px;height:116px;background:#9c9c9c;"></div>
<div style="left:1336.7px;top:638px;width:1.2px;height:116px;background:#9c9c9c;"></div>
<div style="left:1436.7px;top:638px;width:1.2px;height:116px;background:#9c9c9c;"></div>
<div style="left:1536.7px;top:638px;width:1.2px;height:116px;background:#9c9c9c;"></div>
<div style="left:37px;top:662.6px;width:1536px;height:1.2px;background:#9c9c9c;"></div>
<div style="left:37px;top:681.8px;width:1536px;height:1.2px;background:#9c9c9c;"></div>
<div style="left:37px;top:701px;width:1536px;height:1.2px;background:#9c9c9c;"></div>
<div style="left:37px;top:720px;width:1536px;height:1.2px;background:#9c9c9c;"></div>
<div style="left:37px;top:739px;width:1536px;height:1.2px;background:#9c9c9c;"></div>
<span class="t" style="left:98.00px;top:642.50px;font-size:12px;line-height:16px;color:#000;transform:scaleX(0.9658);">Period</span>
<span class="t" style="left:175.00px;top:642.50px;font-size:12px;line-height:16px;color:#000;">Profit/Loss</span>
<span class="t" style="left:285.00px;top:642.50px;font-size:12px;line-height:16px;color:#000;">Cum P/L</span>
<span class="t" style="left:371.00px;top:642.50px;font-size:12px;line-height:16px;color:#000;transform:scaleX(0.9551);">Gross Profit</span>
<span class="t" style="left:477.00px;top:642.50px;font-size:12px;line-height:16px;color:#000;transform:scaleX(0.8981);">Gross Loss</span>
<span class="t" style="left:555.00px;top:642.50px;font-size:12px;line-height:16px;color:#000;transform:scaleX(0.9793);">Num Trades</span>
<span class="t" style="left:676.00px;top:642.50px;font-size:12px;line-height:16px;color:#000;transform:scaleX(0.9567);">% Winners</span>
<span class="t" style="left:778.00px;top:642.50px;font-size:12px;line-height:16px;color:#000;transform:scaleX(0.9820);">Avg Trade</span>
<span class="t" style="left:870.00px;top:642.50px;font-size:12px;line-height:16px;color:#000;transform:scaleX(0.9951);">Avg Winner</span>
<span class="t" style="left:980.00px;top:642.50px;font-size:12px;line-height:16px;color:#000;transform:scaleX(0.9570);">Avg Loser</span>
<span class="t" style="left:1053.00px;top:642.50px;font-size:12px;line-height:16px;color:#000;transform:scaleX(0.9647);">Largest Winner</span>
<span class="t" style="left:1163.00px;top:642.50px;font-size:12px;line-height:16px;color:#000;transform:scaleX(0.9335);">Largest Loser</span>
<span class="t" style="left:1275.00px;top:642.50px;font-size:12px;line-height:16px;color:#000;">Drawdown</span>
<span class="t" style="left:1397.00px;top:642.50px;font-size:12px;line-height:16px;color:#000;transform:scaleX(0.9756);">Runup</span>
<span class="t" style="left:1468.00px;top:642.50px;font-size:12px;line-height:16px;color:#000;transform:scaleX(0.9521);">% Of Trades</span>
<span class="t" style="left:84.00px;top:664.70px;font-size:12px;line-height:16px;color:#000;transform:scaleX(0.9906);">3/11/2016</span>
<span class="t" style="left:214.50px;top:664.70px;font-size:12px;line-height:16px;color:#000;transform:scaleX(0.9206);">0.00</span>
<span class="t" style="left:314.50px;top:664.70px;font-size:12px;line-height:16px;color:#000;transform:scaleX(0.9206);">0.00</span>
<span class="t" style="left:414.50px;top:664.70px;font-size:12px;line-height:16px;color:#000;transform:scaleX(0.9206);">0.00</span>
<span class="t" style="left:514.50px;top:664.70px;font-size:12px;line-height:16px;color:#000;transform:scaleX(0.9206);">0.00</span>
<span class="t" style="left:585.70px;top:664.70px;font-size:12px;line-height:16px;color:#000;transform:scaleX(0.8990);">4</span>
<span class="t" style="left:693.00px;top:664.70px;font-size:12px;line-height:16px;color:#000;transform:scaleX(0.9077);">100.00%</span>
<span class="t" style="left:814.50px;top:664.70px;font-size:12px;line-height:16px;color:#000;transform:scaleX(0.9206);">0.00</span>
<span class="t" style="left:914.50px;top:664.70px;font-size:12px;line-height:16px;color:#000;transform:scaleX(0.9206);">0.00</span>
<span class="t" style="left:1014.50px;top:664.70px;font-size:12px;line-height:16px;color:#000;transform:scaleX(0.9206);">0.00</span>
<span class="t" style="left:1114.50px;top:664.70px;font-size:12px;line-height:16px;color:#000;transform:scaleX(0.9206);">0.00</span>
<span class="t" style="left:1214.50px;top:664.70px;font-size:12px;line-height:16px;color:#000;transform:scaleX(0.9206);">0.00</span>
<span class="t" style="left:1314.50px;top:664.70px;font-size:12px;line-height:16px;color:#000;transform:scaleX(0.9206);">0.00</span>
<span class="t" style="left:1414.50px;top:664.70px;font-size:12px;line-height:16px;color:#000;transform:scaleX(0.9206);">0.00</span>
<svg style="left:22px;top:787px" width="32" height="23" viewBox="0 0 32 23">
<rect x="0.5" y="-5" width="31" height="27" fill="#eef1f7" stroke="#b9c0cc"/>
<g stroke="#cdd4e6" stroke-width="1"><path d="M2,2.5H30M2,5.5H30M2,8.5H30M2,11.5H30M2,14.5H30M2,17.5H30"/></g>
<rect x="0" y="21" width="32" height="2" fill="#aab1c0"/>
</svg>
<span class="t" style="left:12.50px;top:814.00px;font-size:12px;line-height:16px;color:#fff;transform:scaleX(1.0177);text-shadow:1px 1px 2px #000,0 0 2px #000,1px 1px 1px #000;">New Text</span>
<span class="t" style="left:11.00px;top:829.00px;font-size:12px;line-height:16px;color:#fff;transform:scaleX(0.9875);text-shadow:1px 1px 2px #000,0 0 2px #000,1px 1px 1px #000;">Docume...</span>
<div style="left:3px;top:860px;width:541px;height:51px;background:#fff;"></div>
<div style="left:544px;top:870px;width:1056px;height:29.5px;background:rgba(172,118,100,0.78);"></div>
<div style="left:0px;top:870px;width:3px;height:29.5px;background:rgba(172,118,100,0.78);"></div>
<div style="left:0px;top:899.5px;width:1600px;height:12px;background:#fff;"></div>
<div style="left:550px;top:871.5px;width:158px;height:28px;background:rgba(255,255,255,0.22);border:1px solid rgba(255,255,255,0.35);"></div>
<svg style="left:558px;top:877px" width="17" height="17" viewBox="0 0 17 17">
<circle cx="8.5" cy="8.5" r="7.6" fill="#1020e0" stroke="#000" stroke-width="1.4"/>
<path d="M4,3.5 L8,2.2 L9.5,4 L7.5,6 L8.5,8 L11,8.5 L12.5,11 L10.5,14 L8.5,13.5 L8,10.5 L5.5,9.5 L4.5,6.5 Z" fill="#25d235"/>
<path d="M11,2.5 L13.5,4.5 L12.5,6 L10.8,4.5 Z" fill="#25d235"/>
</svg>
<span class="t" style="left:579.00px;top:877.50px;font-size:12px;line-height:16px;color:#fff;transform:scaleX(0.9370);">Sierra Chart 1379 ope...</span>
<div style="left:709px;top:871.5px;width:159px;height:28px;background:linear-gradient(90deg,rgba(255,255,255,0.42),rgba(255,255,255,0.18));border:1px solid rgba(255,255,255,0.85);"></div>
<svg style="left:717px;top:877px" width="17" height="17" viewBox="0 0 17 17">
<circle cx="8.5" cy="8.5" r="7.6" fill="#1020e0" stroke="#000" stroke-width="1.4"/>
<path d="M4,3.5 L8,2.2 L9.5,4 L7.5,6 L8.5,8 L11,8.5 L12.5,11 L10.5,14 L8.5,13.5 L8,10.5 L5.5,9.5 L4.5,6.5 Z" fill="#25d235"/>
<path d="M11,2.5 L13.5,4.5 L12.5,6 L10.8,4.5 Z" fill="#25d235"/>
</svg>
<span class="t" style="left:738.00px;top:877.50px;font-size:12px;line-height:16px;color:#fff;">Trade Activity Log</span>
<div style="left:872px;top:871.5px;width:158px;height:28px;background:rgba(255,255,255,0.22);border:1px solid rgba(255,255,255,0.35);"></div>
<svg style="left:881px;top:878px" width="15" height="15" viewBox="0 0 15 15">
<circle cx="7.5" cy="7.5" r="7" fill="#1f55c8"/><circle cx="7.5" cy="6.5" r="5.5" fill="#3f7ee6"/>
<rect x="3.5" y="8" width="2" height="2.5" fill="#fff"/><rect x="6.2" y="6.5" width="2" height="4" fill="#fff"/><rect x="9" y="4.5" width="2.2" height="6" fill="#fff"/>
</svg>
<span class="t" style="left:901.00px;top:877.50px;font-size:12px;line-height:16px;color:#fff;transform:scaleX(0.9466);">OEC Trader Demo 3.5</span>
<svg style="left:1390px;top:872px" width="120" height="28" viewBox="0 0 120 28">
<path d="M6.5,16.5 L10.5,12 L14.5,16.5 Z" fill="#fff"/>
<g fill="none" stroke="#fff" stroke-width="1.3">
<path d="M28.300,6.500 V22" stroke-width="1.600"/><path d="M29.500,7.300 H37 Q39,8.800 43.500,8.200 Q42.500,12.500 38,13.600 Q34,13.200 29.500,13.400 Z" fill="#fff" stroke-width="0.800"/>
<rect x="58.300" y="8.300" width="7.400" height="12.400" stroke-width="1.600"/><path d="M60.500,8 V6.300 H63.500 V8" stroke-width="1.600"/>
<path d="M52.500,6 V10 M55.500,6 V10 M54,14 V21.500" stroke-width="1.500"/><rect x="51" y="10" width="6" height="4.500" fill="#fff" stroke="none"/>
<path d="M77.500,11.300 H80.500 L84.300,7.500 V20.500 L80.500,16.700 H77.500 Z" fill="#e8e8e8"/><path d="M86.5,11 Q88.5,14 86.5,17"/><path d="M89,9 Q92,14 89,19"/>
</g>
<g fill="#fff"><rect x="99.500" y="18" width="2.400" height="3"/><rect x="102.700" y="16" width="2.400" height="5"/><rect x="105.900" y="13.500" width="2.400" height="7.500"/><rect x="109.100" y="11" width="2.400" height="10"/><rect x="112.300" y="8" width="2.400" height="13"/></g>
</svg>
<span class="t" style="left:1539.00px;top:877.50px;font-size:12px;line-height:16px;color:#fff;transform:scaleX(0.8991);">19:19</span>
<div style="left:951px;top:76px;width:100px;height:161px;border:5px solid #ed1c24;"></div>
<div style="left:483px;top:76px;width:70px;height:54px;border:5px solid #0ea2e3;"></div>
<div style="left:1368px;top:26px;width:136.5px;height:36.5px;border:5px solid #ed1c24;"></div>
<div style="left:525px;top:486px;width:147.5px;height:64.5px;border:5px solid #ed1c24;"></div>
<div style="left:158px;top:638px;width:388px;height:63px;border:5px solid #ed1c24;"></div>
<div style="left:552px;top:626px;width:75px;height:76px;border:5px solid #0ea2e3;"></div>
<span class="t" style="left:732.00px;top:294.00px;font-size:12.5px;line-height:16px;color:#000;transform:scaleX(0.9299);">OEC TRADER</span>
<span class="t" style="left:899.00px;top:720.20px;font-size:12.5px;line-height:16px;color:#000;transform:scaleX(0.9589);">SIERRA ACTIVITY LOG</span>
<svg style="left:740px;top:738px" width="44" height="136" viewBox="740 738 44 136">
<path d="M761.5,746 L748.2,804.6 L755.7,804.6 L755.7,866.8 L767.3,866.8 L767.3,804.6 L773.8,804.6 Z" fill="none" stroke="#000" stroke-width="5.3" stroke-linejoin="round"/>
<rect x="758.3" y="860.2" width="6.5" height="4.2" fill="#7f7f7f"/>
</svg>
</body></html>
